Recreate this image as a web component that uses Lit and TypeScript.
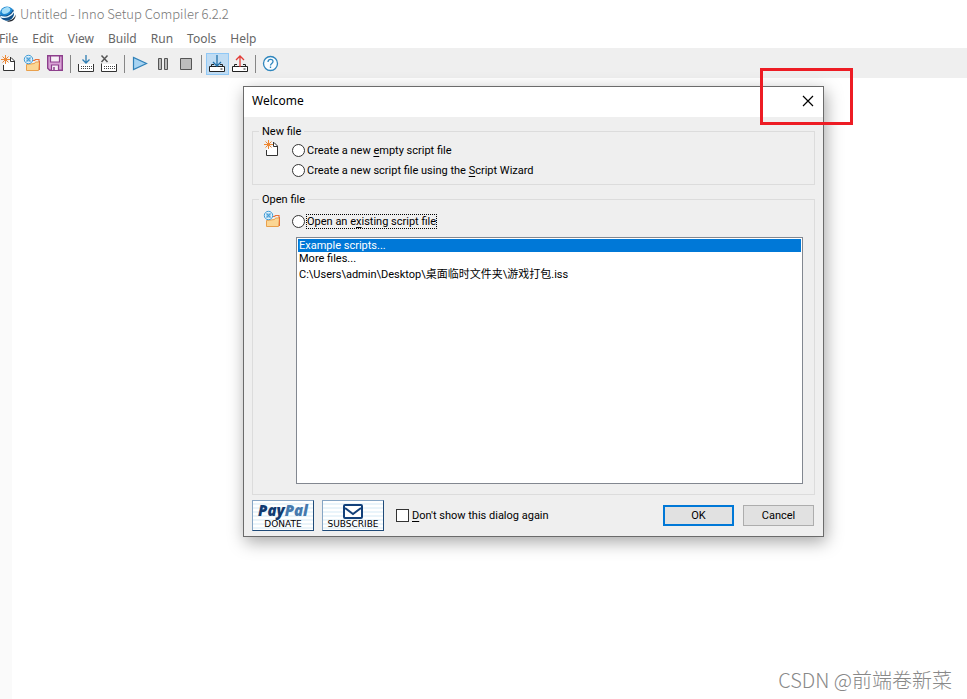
import { LitElement, html, css, svg } from "lit";
import { customElement } from "lit/decorators.js";

const newFile = svg`
  <path d="M8.500 2.500h1l4 4v9h-11v-7l6-2z" fill="#fff"/>
  <path d="M9 2.500h1l3.500 3.500v9.500h-11V10M9.500 2.500v4h4" fill="none" stroke="#333"/>
  <path d="M4.500 0v9M0 4.500h9M1.500 1.500l6 6M7.500 1.500l-6 6" stroke="#ed8733" fill="none"/>`;

const openFile = svg`
  <path d="M9 5.500h1.500l1-1h3.500v3" fill="none" stroke="#e8713a" stroke-width="1.200"/>
  <path d="M2.500 9.500l8-1 1-1.500h4l-1 8.500h-12z" fill="#fbd694" stroke="#e9a04c"/>
  <path d="M15.500 6v9" stroke="#e8713a"/>
  <circle cx="4.500" cy="4.500" r="4.200" fill="#e4f2fb" stroke="#3f9bd5"/>
  <path d="M2.500 2.500l4 4M6.500 2.500l-4 4" stroke="#3f9bd5" stroke-width="1.200"/>
  <circle cx="4.500" cy="4.500" r="2.200" fill="none" stroke="#8cc4e8" stroke-width=".8"/>`;

const drive = svg`<path d="M.5 9v7.500h15V9" fill="#fff" stroke="#333"/><path d="M3 11.500h11M3 13.500h11" stroke="#444" stroke-dasharray="1 1"/>`;
const tray = svg`<path d="M.5 11.500h15v5H.5z" fill="#fff" stroke="#222"/><path d="M2.500 11V9.500H5M11 9.500h2.500V11" fill="none" stroke="#222"/><path d="M11.500 14h2" stroke="#222"/>`;

const icons: Record<string, unknown> = {
  new: newFile,
  open: openFile,
  save: svg`<path d="M.7 .7h14.600v14.600H2.700l-2-2z" fill="#d9a3d6" stroke="#8d3f8c" stroke-width="1.400"/><path d="M3.500 1h9v6h-9zM4.500 10h7v5.500h-7z" fill="#f5eef5" stroke="#8d3f8c" stroke-width="1.200"/><path d="M7 12v3" stroke="#8d3f8c" stroke-width="1.500"/>`,
  compile: svg`${drive}<path d="M8 0v8M4.500 4.500L8 8l3.500-3.500" fill="none" stroke="#2f7db3" stroke-width="1.300"/>`,
  stopCompile: svg`${drive}<path d="M-1-1h9v10h-9z" fill="#efefef"/><path d="M.5 8.500v2" stroke="#333"/><path d="M.5 .5l6 6.500M6.500 .5l-6 6.500" stroke="#555" stroke-width="1.500"/>`,
  run: svg`<path d="M1.500 2.500v12l13-6z" fill="#a6d3f2" stroke="#2f80b8" stroke-width="1.200"/>`,
  pause: svg`<path d="M3.500 3.500h3v11h-3zM9.500 3.500h3v11h-3z" fill="#bbb" stroke="#555"/>`,
  stop: svg`<path d="M2.500 3.500h11v11h-11z" fill="#bdbdbd" stroke="#555"/>`,
  install: svg`${tray}<path d="M8 0v11M4 7l4 4 4-4" fill="none" stroke="#2270a8" stroke-width="1.300"/>`,
  uninstall: svg`${tray}<path d="M8 12V1M4 5l4-4 4 4" fill="none" stroke="#e23b36" stroke-width="1.300"/>`,
  help: svg`<circle cx="7.500" cy="8.500" r="7" fill="#f8fcff" stroke="#2f86bd" stroke-width="1.300"/><path d="M5 7c0-3.500 5-3.500 5-.5 0 2-2.500 2-2.500 4M7.500 11.500V13" fill="none" stroke="#2f86bd" stroke-width="1.300"/>`,
};

const icon = (name: string) => html`<svg class="icon" viewBox="0 0 17 17" aria-hidden="true">${icons[name]}</svg>`;

@customElement("app-root")
export class AppRoot extends LitElement {
  static styles = css`
    :host {
      display: flex;
      flex-direction: column;
      min-height: 100vh;
      position: relative;
      overflow: hidden;
      background: #fff;
      color: #000;
      font: 11px/13px Roboto, "Noto Sans CJK SC", sans-serif;
    }
    * { box-sizing: border-box; }
    button, select, input { font: inherit; margin: 0; color: inherit; }
    .titlebar {
      display: flex;
      align-items: center;
      gap: 4px;
      height: 28px;
      font: 300 13px/16px "Noto Sans CJK SC", sans-serif;
      color: #777;
    }
    .logo { width: 16px; height: 16px; }
    .menu {
      display: flex;
      gap: 14px;
      height: 20px;
      margin-left: -1px;
      font: 12px/21px "Noto Sans", sans-serif;
    }
    .menu button { border: 0; padding: 0; background: none; color: #666; }
    .toolbar {
      display: flex;
      align-items: center;
      height: 30px;
      padding-top: 1px;
      background: #efefef;
      margin-left: -2px;
    }
    .tool {
      display: grid;
      place-items: center;
      width: 23px;
      height: 22px;
      padding: 0;
      border: 1px solid transparent;
      background: none;
    }
    .tool.on { background: #c0dcf3; border-color: #90c8f6; }
    .icon { display: block; width: 17px; height: 17px; overflow: visible; }
    .sep { width: 1px; height: 18px; margin: 0 4px 0 3px; background: #868686; }
    .editor { flex: 1; display: grid; grid-template-columns: 12px 1fr; }
    .gutter { background: #fafafa; }
    .dialog {
      position: absolute;
      top: 86px;
      left: 243px;
      right: 143px;
      border: 1px solid #6b6b6b;
      background: #efefef;
      box-shadow: 2px 5px 16px rgba(0, 0, 0, 0.35);
    }
    .caption {
      display: flex;
      align-items: center;
      justify-content: space-between;
      height: 30px;
      padding: 0 9px 2px 8px;
      background: #fff;
    }
    .caption h1 { margin: 0; font: 12px/16px "Noto Sans", sans-serif; }
    .close { padding: 0; border: 0; background: none; width: 12px; height: 12px; }
    .close svg { display: block; width: 12px; height: 12px; }
    .body { padding: 8px 8px 5px; display: grid; gap: 8px; }
    fieldset {
      display: grid;
      grid-template-columns: 27px 1fr;
      min-width: 0;
      margin: 0;
      border: 1px solid #dcdcdc;
      padding: 2px 11px 4px;
    }
    .open { padding-top: 5px; padding-bottom: 5px; }
    legend { padding: 0 3px; margin-left: -5px; }
    .rows { display: grid; }
    label { display: flex; align-items: center; height: 20px; gap: 2px; }
    label u { text-underline-offset: 2px; }
    input { appearance: none; width: 13px; height: 13px; border: 1px solid #333; background: #fff; }
    input[type="radio"] { border-radius: 50%; margin-left: 1px; }
    .focus { outline: 1px dotted #000; }
    .list {
      display: block;
      width: 100%;
      height: 247px;
      margin: 6px 0 5px;
      padding: 1px;
      border: 1px solid #828790;
      border-radius: 0;
      background: #fff;
      outline: 0;
      overflow: hidden;
    }
    .files { margin-left: 5px; }
    .list option { padding: 0 1px; height: 13px; min-height: 13px; line-height: 13px; color: #000; overflow: visible; }
    .list option:checked {
      background: #0078d7 linear-gradient(#0078d7, #0078d7);
      color: #fff;
      -webkit-text-fill-color: #fff;
    }
    .footer { display: flex; align-items: center; height: 31px; margin-top: -3px; padding-right: 1px; }
    .badge {
      display: grid;
      grid-template-rows: 18px 9px;
      justify-items: center;
      width: 62px;
      height: 31px;
      margin-right: 8px;
      padding: 1px 0 0;
      border: 1px solid #1f4a78;
      border-top-color: #87a5c4;
      border-left-color: #87a5c4;
      background: repeating-linear-gradient(#fff 0 2px, #eaf4fa 2px 4px);
      font: 9px/9px "DejaVu Sans", sans-serif;
    }
    .paypal { font: italic 800 15px/17px "Open Sans", sans-serif; color: #113a70; }
    .paypal span { color: #4679ad; }
    .mail { display: block; width: 20px; height: 15px; align-self: center; }
    .again { margin: 0 auto 0 4px; gap: 3px; }
    .push {
      width: 71px;
      height: 21px;
      margin-left: 9px;
      padding: 0;
      border: 1px solid #adadad;
      background: #e1e1e1;
    }
    .push.default { border: 2px solid #0078d7; }
    .highlight {
      position: absolute;
      top: 68px;
      right: 114px;
      width: 93px;
      height: 57px;
      border: 3px solid #ed1c24;
      pointer-events: none;
    }
    .watermark {
      position: absolute;
      right: 15px;
      bottom: 6px;
      font: 20px/26px "Noto Sans CJK SC", sans-serif;
      font-weight: 300;
      color: #888;
    }
  `;

  render() {
    return html`
      <header class="titlebar">
        <svg class="logo" viewBox="0 0 16 16" aria-hidden="true">
          <path d="M5 14.500c5 1 10-2 10.500-6 .8 4-3 7.500-7 7.300z" fill="#20252d"/>
          <circle cx="7" cy="7.500" r="7" fill="#1c86d1"/>
          <ellipse cx="6" cy="4.500" rx="4.500" ry="3" fill="#a5def8" transform="rotate(-25 6 4.500)"/>
          <path d="M0 9c5 2 11 0 13-6 3 5-1 11.500-6 11.500C3 14.500 0 12 0 9z" fill="#134f86"/>
          <path d="M.5 10.500c5 2 11 0 13.500-5" stroke="#e8f6fd" stroke-width="1.500" fill="none"/>
        </svg>
        <span>Untitled - Inno Setup Compiler 6.2.2</span>
      </header>
      <nav class="menu">
        ${["File", "Edit", "View", "Build", "Run", "Tools", "Help"].map((m) => html`<button>${m}</button>`)}
      </nav>
      <div class="bar">
        <div class="toolbar" role="toolbar">
          ${["new", "open", "save", "|", "compile", "stopCompile", "|", "run", "pause", "stop", "|", "install", "uninstall", "|", "help"].map((n) =>
            n === "|"
              ? html`<span class="sep"></span>`
              : html`<button class="tool ${n === "install" ? "on" : ""}" aria-label=${n}>${icon(n)}</button>`
          )}
        </div>
      </div>
      <main class="editor"><div class="gutter"></div><div></div></main>

      <section class="dialog" role="dialog" aria-labelledby="caption">
        <div class="caption">
          <h1 id="caption">Welcome</h1>
          <button class="close" aria-label="Close">
            <svg viewBox="0 0 12 12"><path d="M1 1l10 10M11 1L1 11" stroke="#000" stroke-width="1.200"/></svg>
          </button>
        </div>
        <form class="body" @submit=${(e: Event) => e.preventDefault()}>
          <fieldset>
            <legend>New file</legend>
            ${icon("new")}
            <div class="rows">
              <label><input type="radio" name="action" /><span>Create a new <u>e</u>mpty script file</span></label>
              <label><input type="radio" name="action" /><span>Create a new script file using the <u>S</u>cript Wizard</span></label>
            </div>
          </fieldset>
          <fieldset class="open">
            <legend>Open file</legend>
            ${icon("open")}
            <div class="rows">
              <label><input type="radio" name="action" /><span class="focus">Open an e<u>x</u>isting script file</span></label>
              <div class="files">
                <select class="list" size="18" aria-label="Files">
                  <option selected>Example scripts...</option>
                  <option>More files...</option>
                  <option>C:\\Users\\admin\\Desktop\\桌面临时文件夹\\游戏打包.iss</option>
                </select>
              </div>
            </div>
          </fieldset>
          <div class="footer">
            <button class="badge"><span class="paypal">Pay<span>Pal</span></span><span>DONATE</span></button>
            <button class="badge">
              <svg class="mail" viewBox="0 0 20 15"><rect x="1" y="1" width="18" height="13" rx="1" fill="#fff" stroke="#12407a" stroke-width="2"/><path d="M2 4l8 6 8-6" fill="none" stroke="#12407a" stroke-width="2"/></svg>
              <span>SUBSCRIBE</span>
            </button>
            <label class="again"><input type="checkbox" /><span><u>D</u>on't show this dialog again</span></label>
            <button class="push default">OK</button>
            <button class="push">Cancel</button>
          </div>
        </form>
      </section>
      <div class="highlight"></div>
      <div class="watermark">CSDN @前端卷新菜</div>
    `;
  }
}
